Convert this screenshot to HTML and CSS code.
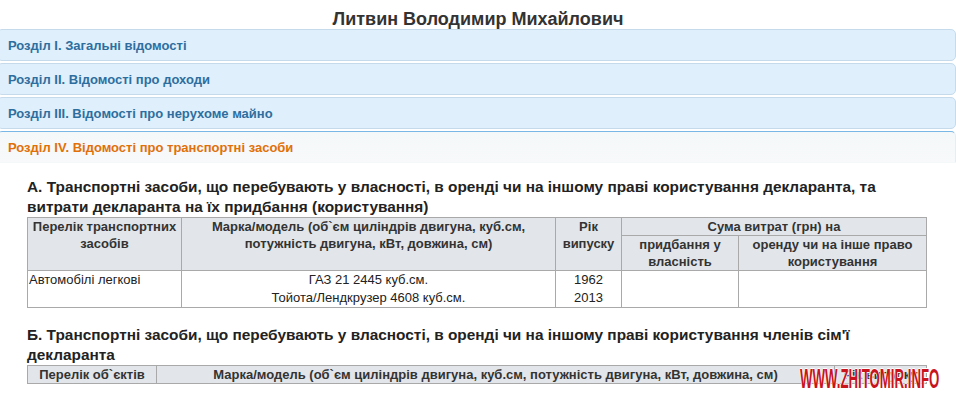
FILE: index.html
```html
<!DOCTYPE html>
<html lang="uk">
<head>
    <meta charset="UTF-8">
    <title>Литвин Володимир Михайлович</title>
    <link rel="stylesheet" href="styles.css">
</head>
<body>
    <h1 class="person-name">Литвин Володимир Михайлович</h1>

    <div class="accordion">
        <h3 class="acc-header">Розділ I. Загальні відомості</h3>
        <h3 class="acc-header">Розділ II. Відомості про доходи</h3>
        <h3 class="acc-header">Розділ III. Відомості про нерухоме майно</h3>
        <h3 class="acc-header acc-active">Розділ IV. Відомості про транспортні засоби</h3>

        <div class="acc-panel">
            <h4 class="part-title">А. Транспортні засоби, що перебувають у власності, в оренді чи на іншому праві користування декларанта, та витрати декларанта на їх придбання (користування)</h4>
            <table class="decl-table">
                <colgroup>
                    <col style="width: 154px">
                    <col style="width: 374px">
                    <col style="width: 66px">
                    <col style="width: 117px">
                    <col>
                </colgroup>
                <thead>
                    <tr>
                        <th rowspan="2">Перелік транспортних засобів</th>
                        <th rowspan="2">Марка/модель (об`єм циліндрів двигуна, куб.см, потужність двигуна, кВт, довжина, см)</th>
                        <th rowspan="2">Рік випуску</th>
                        <th colspan="2">Сума витрат (грн) на</th>
                    </tr>
                    <tr>
                        <th>придбання у власність</th>
                        <th>оренду чи на інше право користування</th>
                    </tr>
                </thead>
                <tbody>
                    <tr>
                        <td>Автомобілі легкові</td>
                        <td class="center">ГАЗ 21 2445 куб.см.<br>Тойота/Лендкрузер 4608 куб.см.</td>
                        <td class="center">1962<br>2013</td>
                        <td></td>
                        <td></td>
                    </tr>
                </tbody>
            </table>

            <h4 class="part-title">Б. Транспортні засоби, що перебувають у власності, в оренді чи на іншому праві користування членів сім'ї декларанта</h4>
            <table class="decl-table">
                <colgroup>
                    <col style="width: 129px">
                    <col style="width: 678px">
                    <col>
                </colgroup>
                <thead>
                    <tr>
                        <th>Перелік об`єктів</th>
                        <th>Марка/модель (об`єм циліндрів двигуна, куб.см, потужність двигуна, кВт, довжина, см)</th>
                        <th>Рік випуску</th>
                    </tr>
                </thead>
            </table>
        </div>
    </div>

    <div class="watermark">WWW.ZHITOMIR.INFO</div>
</body>
</html>
```

FILE: styles.css
```css
body {
    font-family: 'Liberation Sans', Arial, sans-serif;
    margin: 0;
    background: #fff;
    color: #333;
    overflow: hidden;
}

.person-name {
    text-align: center;
    font-size: 18px;
    line-height: 20px;
    margin: 9px 0 0;
    color: #333;
}

.accordion {
    margin: 0 0 0 -3px;
}

.acc-header {
    margin: 2px 0 0;
    padding: 8px 10px 7px;
    font-size: 13px;
    line-height: 15px;
    font-weight: bold;
    color: #2e6e9e;
    background: #dfeffc;
    border: 1px solid #c5dbec;
    border-radius: 5px;
}

.acc-header:first-child {
    margin-top: 0;
}

.acc-active {
    color: #e17009;
    background: linear-gradient(#f5f8f9, #f7f9fa);
    border-color: #79b7e7 #e5eef5 transparent;
    border-radius: 5px 5px 0 0;
}

.acc-panel {
    padding: 14px 30px 0;
}

.part-title {
    margin: 0;
    font-size: 15.4px;
    line-height: 20px;
    font-weight: bold;
    color: #222;
}

.decl-table {
    width: 900px;
    border-collapse: collapse;
    table-layout: fixed;
    font-size: 13px;
    margin-bottom: 17px;
}

.decl-table th,
.decl-table td {
    border: 1px solid #a9a9a9;
    padding: 0 1px;
    vertical-align: top;
}

.decl-table th {
    background: #e2e6ea;
    color: #333;
    font-weight: bold;
    line-height: 17px;
    text-align: center;
}

.decl-table td {
    line-height: 18px;
    color: #222;
}

.decl-table td.center {
    text-align: center;
}

.watermark {
    position: absolute;
    left: 800px;
    top: 364px;
    font-family: 'Liberation Sans', Arial, sans-serif;
    font-weight: bold;
    font-size: 27px;
    line-height: 30px;
    color: #c8141c;
    transform: scaleX(0.49);
    transform-origin: left top;
    text-shadow: 1px 0 0 #fff, -1px 0 0 #fff, 0 1px 0 #fff, 0 -1px 0 #fff;
}
```
